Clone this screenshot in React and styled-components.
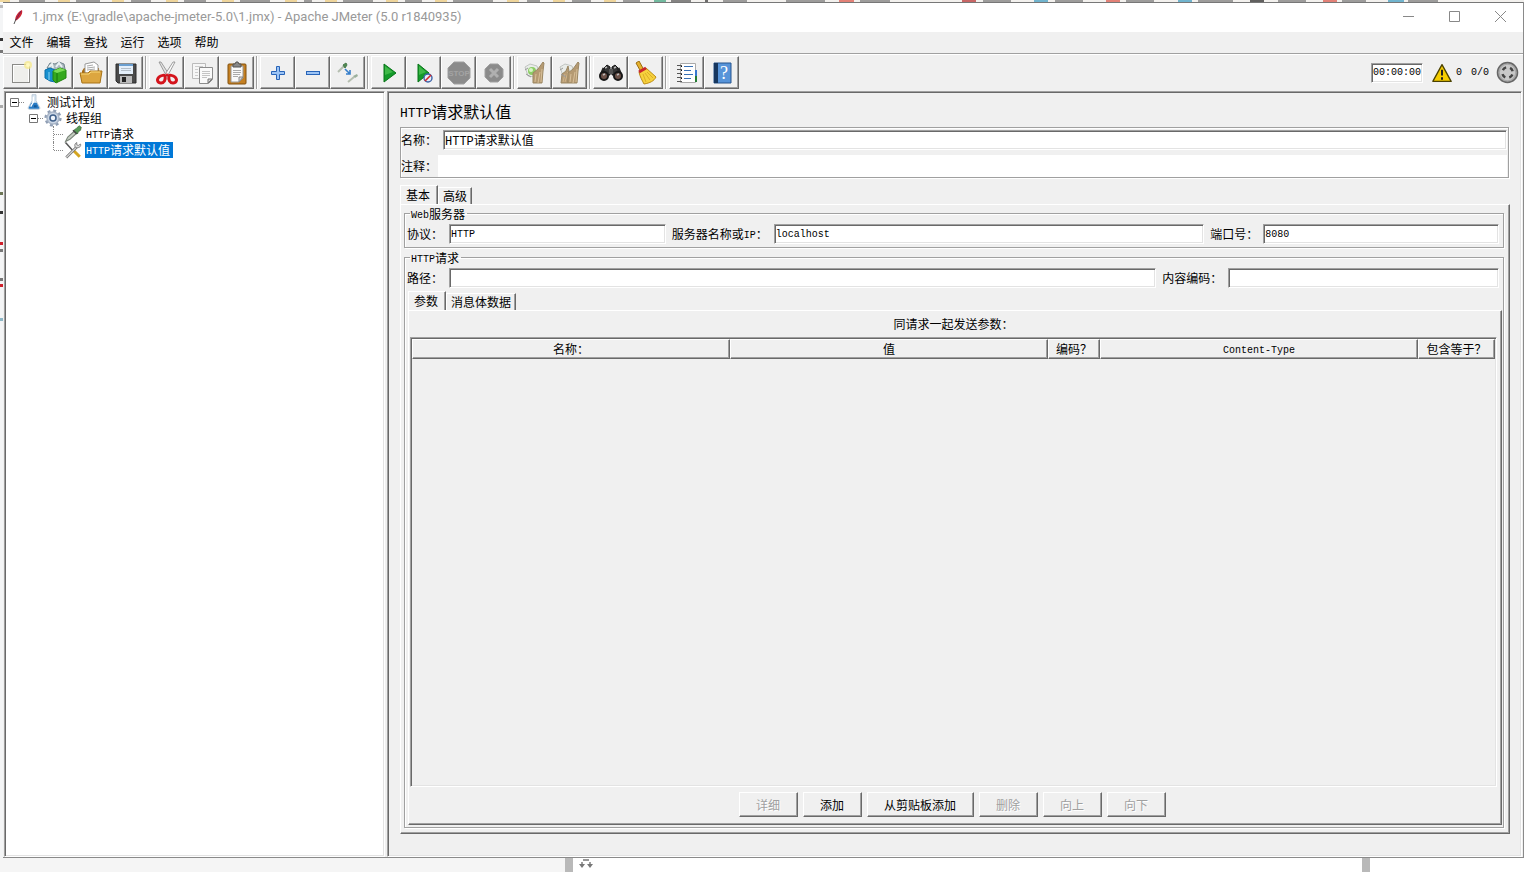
import React, { useState } from "react";
import styled, { createGlobalStyle, css } from "styled-components";

const GlobalStyle = createGlobalStyle`
  * {
    box-sizing: border-box;
  }

  body {
    margin: 0;
    background: #fff;
    color: #000;
    font: 12px/16px "Noto Sans CJK SC", sans-serif;
  }

  button,
  input {
    font: inherit;
    color: inherit;
    border-radius: 0;
    margin: 0;
  }
`;

const mono = `"Liberation Mono", "Noto Sans CJK SC", monospace`;

const raised = css`
  border: 1px solid;
  border-color: #fff #696969 #696969 #fff;
  box-shadow: inset -1px -1px 0 #a0a0a0;
`;

const sunken = css`
  border: 1px solid;
  border-color: #a0a0a0 #fff #fff #a0a0a0;
  box-shadow: inset 1px 1px 0 #696969, inset -1px -1px 0 #e3e3e3;
  outline: none;
`;

const etched = css`
  border: 1px solid #a0a0a0;
  box-shadow: 1px 1px 0 #fff, inset 1px 1px 0 #fff;
`;

const Desktop = styled.div`
  display: flex;
  flex-direction: column;
  min-height: 100vh;
`;

const TopSliver = styled.svg`
  display: block;
  width: 100%;
  height: 2px;
  background: #f3f1ee;
`;

const Middle = styled.div`
  display: flex;
  flex: 1;
`;

const LeftSliver = styled.svg`
  display: block;
  width: 3px;
  background: #f4f5f6;
`;

const BottomSliver = styled.div`
  display: flex;
  height: 14px;
  background: #fff;
`;

const SliverPart = styled.div`
  flex: ${(props) => props.$grow || "0 0 8px"};
  background: ${(props) => props.$color || "#b9b9b9"};

  svg {
    display: block;
    margin-left: 6px;
  }
`;

const Window = styled.div`
  display: flex;
  flex: 1;
  flex-direction: column;
  min-width: 0;
  background: #f0f0f0;
  border: solid #8a8a8a;
  border-width: 0 1px 1px 0;
`;

const TitleBar = styled.header`
  display: flex;
  align-items: center;
  height: 30px;
  padding: 0 0 2px 9px;
  background: #fff;
  border-top: 1px solid #777;
`;

const WindowTitle = styled.h1`
  flex: 1;
  margin: 0 0 0 8px;
  font: 13px/16px Roboto, sans-serif;
  color: #999;
`;

const WindowButton = styled.button`
  display: flex;
  align-items: center;
  justify-content: center;
  width: 46px;
  height: 27px;
  padding: 0;
  border: none;
  background: none;
`;

const MenuBar = styled.nav`
  display: flex;
  height: 22px;
  padding-bottom: 2px;
  border-bottom: 1px solid #a0a0a0;
`;

const MenuButton = styled.button`
  width: 37px;
  padding: 0;
  border: none;
  background: none;
`;

const ToolBar = styled.div`
  display: flex;
  align-items: center;
  height: 37px;
  padding: 0 4px 1px 0;
  border-top: 1px solid #fff;
`;

const ToolButton = styled.button`
  display: flex;
  align-items: center;
  justify-content: center;
  width: 35px;
  height: 33px;
  padding: 0;
  background: #f0f0f0;
  ${raised}
`;

const ToolSeparator = styled.div`
  width: 2px;
  height: 33px;
  margin: 0 2px;
  border-left: 1px solid #a0a0a0;
  background: #fff;
`;

const Status = styled.div`
  display: flex;
  align-items: center;
  margin-left: auto;
  font-family: ${mono};
  font-size: 10px;
`;

const Timer = styled.output`
  width: 52px;
  height: 20px;
  background: #fff;
  line-height: 18px;
  text-align: center;
  white-space: nowrap;
  ${sunken}
`;

const WarningButton = styled.button`
  display: flex;
  align-items: center;
  gap: 4px;
  margin: 0 9px;
  padding: 0;
  border: none;
  background: none;
`;

const ThreadState = styled.span`
  display: flex;
  align-items: center;
  gap: 7px;
`;

const Split = styled.div`
  display: flex;
  flex: 1;
  padding: 0 1px;
`;

const TreePane = styled.aside`
  flex: 0 0 381px;
  padding: 2px 1px;
  background: #fff;
  ${sunken}
`;

const TreeList = styled.ul`
  margin: 0;
  padding: 0;
  list-style: none;
`;

const TreeRow = styled.div`
  display: flex;
  align-items: center;
  height: 16px;
  padding-left: ${(props) => props.$depth * 19 + 4}px;
`;

const Toggle = styled.button`
  display: flex;
  width: 9px;
  height: 9px;
  padding: 0;
  border: none;
  background: none;
`;

const Dots = styled.span`
  width: ${(props) => props.$width}px;
  border-top: 1px dotted #888;
`;

const Stem = styled.span`
  align-self: ${(props) => (props.$last ? "flex-start" : "stretch")};
  height: ${(props) => (props.$last ? "8px" : "auto")};
  margin-left: 5px;
  border-left: 1px dotted #888;
`;

const NodeIcon = styled.span`
  display: flex;
  align-items: center;
  justify-content: center;
  width: 20px;
  height: 18px;
`;

const NodeLabel = styled.button`
  height: 16px;
  margin-left: 2px;
  padding: 0 3px 0 1px;
  border: none;
  line-height: 16px;
  white-space: nowrap;
  background: ${(props) => (props.$selected ? "#0078d7" : "none")};
  color: ${(props) => (props.$selected ? "#fff" : "#000")};
`;

const Latin = styled.span`
  font-family: ${mono};
  font-size: ${(props) => (props.$large ? 13 : 10)}px;
  line-height: 1;
  vertical-align: 1px;
`;

const Editor = styled.main`
  display: flex;
  flex: 1;
  flex-direction: column;
  min-width: 0;
  margin-left: 2px;
  padding: 9px 11px 22px 12px;
  ${sunken}
`;

const EditorTitle = styled.h2`
  margin: 0 0 6px;
  font-size: 16px;
  font-weight: normal;
  line-height: 20px;
`;

const NameBox = styled.div`
  margin: 0 1px 7px 0;
  padding: 2px 1px 0 0;
  ${etched}
`;

const NameRow = styled.div`
  display: flex;
  align-items: center;
  margin-bottom: ${(props) => (props.$last ? 0 : 5)}px;
`;

const Label = styled.label`
  flex: none;
  width: ${(props) => props.$width}px;
  white-space: nowrap;
`;

const TextInput = styled.input`
  flex: 1;
  width: 0;
  min-width: 0;
  height: 20px;
  padding: 0 1px;
  background: #fff;
  font-family: ${mono};
  font-size: ${(props) => (props.$latin ? 10 : 12)}px;
  ${sunken}
`;

const PlainInput = styled.input`
  flex: 1;
  height: 22px;
  padding: 0 2px;
  border: none;
  outline: none;
  background: #fff;
`;

const Tabs = styled.div`
  display: flex;
  flex: 1;
  flex-direction: column;
  margin: ${(props) => (props.$inner ? "3px 1px 0" : "0")};
`;

const TabList = styled.div`
  display: flex;
  align-items: flex-end;
  height: 19px;
`;

const Tab = styled.button`
  height: ${(props) => (props.$active ? 19 : 17)}px;
  padding: ${(props) => (props.$active ? "0 7px 0 5px" : "0 4px")};
  background: #f0f0f0;
  border: solid;
  border-width: 1px 1px 0 1px;
  border-color: #fff #696969 #fff #fff;
  box-shadow: inset -1px 0 0 #a0a0a0;
  line-height: 16px;
`;

const TabPanel = styled.section`
  display: flex;
  flex: 1;
  flex-direction: column;
  padding: ${(props) => props.$padding};
  ${raised}
`;

const Group = styled.fieldset`
  display: flex;
  flex: ${(props) => (props.$fill ? "1" : "none")};
  flex-direction: column;
  min-width: 0;
  margin: 0 0 ${(props) => (props.$fill ? 0 : 3)}px;
  padding: 5px 0 ${(props) => (props.$fill ? 2 : 3)}px 2px;
  ${etched}
`;

const GroupTitle = styled.legend`
  height: 12px;
  margin-left: 3px;
  padding: 0 2px 0 1px;
  line-height: 13px;
`;

const FieldRow = styled.div`
  display: flex;
  align-items: center;
  gap: 6px;
  padding-right: 4px;
`;

const Field = styled.div`
  display: flex;
  flex: ${(props) => props.$grow} 1 0;
  align-items: center;
  min-width: 0;
`;

const TableCaption = styled.p`
  margin: 0 0 3px;
  text-align: center;
  line-height: 20px;
`;

const TableView = styled.div`
  flex: 1;
  padding: 1px;
  ${sunken}
`;

const ArgumentTable = styled.table`
  width: 100%;
  table-layout: fixed;
  border-collapse: separate;
  border-spacing: 0;
`;

const HeadCell = styled.th`
  width: ${(props) => props.$width || "auto"};
  height: 20px;
  padding: 0;
  font-weight: normal;
  line-height: 16px;
  white-space: nowrap;
  ${raised}
`;

const ButtonRow = styled.div`
  display: flex;
  justify-content: center;
  gap: 5px;
  padding: 5px 2px 6px 0;
`;

const PushButton = styled.button`
  height: 25px;
  padding: 0 17px 0 16px;
  background: #f0f0f0;
  ${raised}

  &:disabled {
    color: #a0a0a0;
    text-shadow: 1px 1px 0 #fff;
  }
`;

const Icon = ({ size = 24, children }) => (
  <svg width={size} height={size} viewBox="0 0 24 24" aria-hidden="true">
    {children}
  </svg>
);

const NewIcon = () => (
  <Icon>
    <rect x="3.5" y="3.5" width="17" height="18" fill="#efefec" stroke="#8b8b88" />
    <path d="M4.5 21V4.5h15V21" fill="none" stroke="#fff" />
    <circle cx="19" cy="4" r="4" fill="#f7e98a" opacity=".75" />
    <circle cx="19" cy="4" r="2" fill="#fff8c0" />
  </Icon>
);

const TemplatesIcon = () => (
  <Icon>
    <path d="M3 7l3-5 5 1 4-2 5 2 1 5-9 4z" fill="#a9b7bd" stroke="#71838c" />
    <path d="M5 6l3-3 1 4M12 6l3-4 3 4" fill="none" stroke="#e9f0f2" strokeWidth="2" />
    <path d="M1 9l5-2 5 2v12l-5-1-5-3z" fill="#1790cf" stroke="#0b6ea9" />
    <path d="M5 11v8" stroke="#8fd5f3" />
    <path d="M9 10l7-3 6 2v8l-10 5-3-3z" fill="#35a91e" stroke="#21850f" />
    <path d="M9 10l4 2 9-3-6-2z" fill="#7bdc55" />
    <path d="M13 12v9" stroke="#16740b" />
  </Icon>
);

const OpenIcon = () => (
  <Icon>
    <path d="M3 10l2-3h15l1 14H3z" fill="#a96d14" />
    <path d="M6 12V3l9-2 4 3v9z" fill="#fff" stroke="#999" />
    <path d="M8 5l6-1M8 7l8-1M8 9l8-1" stroke="#aaa" />
    <path d="M1 12h8l2-2h12l-2 12H3z" fill="#dca640" stroke="#a87316" />
    <path d="M2 13h8l2-2h9" fill="none" stroke="#f8d779" />
  </Icon>
);

const SaveIcon = () => (
  <Icon>
    <path d="M2 3h20v19H4l-2-2z" fill="#4a4a4a" stroke="#2c2c2c" />
    <rect x="5" y="3" width="14" height="10" fill="#e4effa" />
    <path d="M5 4h14" stroke="#6b9fd0" strokeWidth="2" />
    <path d="M7 7.5h10M7 9.5h10" stroke="#b4bec8" />
    <rect x="6" y="15" width="12" height="7" fill="#bbb" />
    <rect x="8" y="16" width="4" height="5" fill="#222" />
  </Icon>
);

const CutIcon = () => (
  <Icon>
    <path d="M4 1l2 0 9 14-3 1z" fill="#e2e2e2" stroke="#888" strokeWidth=".8" />
    <path d="M20 1l-2 0-9 14 3 1z" fill="#fafafa" stroke="#888" strokeWidth=".8" />
    <path d="M10 15c0-1-4-1-6 1-3 3-1 6 2 6s5-3 4-7z" fill="none" stroke="#d4141c" strokeWidth="3" />
    <path d="M14 15c0-1 4-1 6 1 3 3 1 6-2 6s-5-3-4-7z" fill="none" stroke="#d4141c" strokeWidth="3" />
    <path d="M10 15l2-3 2 3z" fill="#d4141c" />
  </Icon>
);

const CopyIcon = () => (
  <Icon>
    <path d="M2.5 2.5h13v15h-13z" fill="#f6f6f6" stroke="#bbb" />
    <path d="M5 5.5h8M5 8.5h3M5 11.5h3M5 14.5h3" stroke="#ccc" />
    <path d="M9.5 6.5h13v12l-4 4h-9z" fill="#fafafa" stroke="#8c8c8c" />
    <path d="M12 10.5h8M12 12.5h8M12 14.5h8M12 16.5h5" stroke="#c4c4c4" />
    <path d="M22 18h-4v4z" fill="#ddd" stroke="#777" />
  </Icon>
);

const PasteIcon = () => (
  <Icon>
    <rect x="3" y="3" width="18" height="20" rx="1" fill="#c58022" stroke="#81500f" />
    <path d="M6 5h12v12l-4 4H6z" fill="#fafafa" stroke="#999" />
    <path d="M8 9.5h8M8 11.5h8M8 13.5h7M8 15.5h5" stroke="#aaa" />
    <path d="M18 16h-4v5z" fill="#d8d8d8" stroke="#888" />
    <path d="M8 6V3h2l1-2h2l1 2h2v3z" fill="#888" stroke="#555" />
  </Icon>
);

const PlusIcon = () => (
  <Icon>
    <path d="M10.5 5.5h3v5h5v3h-5v5h-3v-5h-5v-3h5z" fill="#9cc4f5" stroke="#2864b8" />
  </Icon>
);

const MinusIcon = () => (
  <Icon>
    <rect x="5.5" y="10.5" width="13" height="3" fill="#9cc4f5" stroke="#2864b8" />
  </Icon>
);

const ToggleIcon = () => (
  <Icon>
    <path d="M2 11l6-6" stroke="#b5beb0" strokeWidth="2" />
    <path d="M7 4l3-2 1 2-2 3z" fill="#4d8a50" stroke="#4a7a4c" />
    <path d="M12 21l6-5" stroke="#b5beb0" strokeWidth="2" />
    <path d="M17 15l4-2 1 2-3 2z" fill="#9bb09c" />
    <path d="M9 8l5 5M14 9v4h-4" fill="none" stroke="#377fcb" strokeWidth="1.6" />
  </Icon>
);

const StartIcon = () => (
  <Icon>
    <path d="M7 3l12 9-12 9z" fill="#149a2a" stroke="#087518" />
    <path d="M8 5l8 6-8 3z" fill="#51c656" opacity=".7" />
  </Icon>
);

const StartNoTimersIcon = () => (
  <Icon>
    <path d="M6 3l11 9-11 9z" fill="#149a2a" stroke="#087518" />
    <path d="M7 5l7 6-7 3z" fill="#51c656" opacity=".7" />
    <circle cx="16" cy="17" r="4" fill="#e6eefb" stroke="#3c62a6" strokeWidth="1.4" />
    <path d="M13 20l6-6" stroke="#d4272a" strokeWidth="1.6" />
  </Icon>
);

const StopIcon = () => (
  <Icon>
    <path d="M7 1h10l6 6v10l-6 6H7l-6-6V7z" fill="#8b8b8b" stroke="#a0a0a0" />
    <text
      x="12"
      y="15"
      textAnchor="middle"
      fill="#a3a3a3"
      fontFamily="Liberation Sans, sans-serif"
      fontSize="8"
      fontWeight="bold"
    >
      STOP
    </text>
  </Icon>
);

const ShutdownIcon = () => (
  <Icon>
    <path d="M8 3h8l5 5v8l-5 5H8l-5-5V8z" fill="#8b8b8b" stroke="#a0a0a0" />
    <path d="M8 8l8 8M16 8l-8 8" stroke="#b0b0b0" strokeWidth="3" />
  </Icon>
);

const ClearIcon = ({ all }) => (
  <Icon>
    <path d="M2 6l5-3 7 2 2 6-4 5-7-1z" fill="#e9ece9" stroke="#c1c5c1" />
    {!all && <circle cx="9" cy="10" r="4" fill="#8ccd65" />}
    {!all && <circle cx="8" cy="9" r="2" fill="#d8f3c8" />}
    {all && <path d="M3 22l1-9 4-3 2-5 1 5-1 12z" fill="#b59a72" stroke="#9b8763" />}
    {all && <path d="M5 21l2-8M7 21l3-10" stroke="#d0b48a" />}
    <path d="M10 22V12l5-4 5-7 1 1-1 8-1 12z" fill="#b59a72" stroke="#9b8763" />
    <path d="M12 21l1-8M15 22l2-11M18 21l1-13" stroke="#d8c09a" />
    <path d="M3 13l5 3M2 9l3-2" stroke="#999" />
  </Icon>
);

const SearchIcon = () => (
  <Icon>
    <path d="M5 7l3-3 3 2v8H3zM19 7l-3-3-3 2v8h8z" fill="#363636" stroke="#151515" />
    <path d="M5 7l-3 7M19 7l3 7" stroke="#222" strokeWidth="3" />
    <rect x="10" y="8" width="4" height="5" fill="#555" />
    <circle cx="5" cy="15" r="4" fill="#6c5148" stroke="#171717" strokeWidth="2" />
    <circle cx="19" cy="15" r="4" fill="#6c5148" stroke="#171717" strokeWidth="2" />
    <path d="M4 14l2-1M18 14l2-1M6 7l2-1M15 7l2-1" stroke="#b9b9b9" strokeWidth="1.4" />
  </Icon>
);

const BroomIcon = () => (
  <Icon>
    <path d="M2 2l3-2 5 9-3 2z" fill="#e5b22e" stroke="#9d6d10" />
    <path d="M5 11l7-4 10 9c-2 4-6 6-12 7-2-4-4-7-5-12z" fill="#f6d13d" stroke="#bd8c14" />
    <path d="M5 11l7-4" stroke="#c7252c" strokeWidth="3" />
    <path d="M9 13l3 8M11 12l5 7M13 11l6 6" stroke="#dbae28" />
  </Icon>
);

const FunctionIcon = () => (
  <Icon>
    <path d="M5.5 2.5h15v19h-15z" fill="#fff" stroke="#aaa" />
    <path d="M9 5.5h9M9 9.5h7M9 13.5h9M9 17.5h7" stroke="#3971b5" />
    <path d="M2 4.5h5M2 8.5h5M2 12.5h5M2 16.5h5M2 20.5h5" stroke="#555" />
    <path d="M6 5.5h1M6 9.5h1M6 13.5h1M6 17.5h1" stroke="#111" />
    <path d="M21 9v6" stroke="#3778d0" strokeWidth="2" />
    <path d="M21 15v6" stroke="#267d33" strokeWidth="2" />
  </Icon>
);

const HelpIcon = () => (
  <Icon>
    <path d="M4 2h17v20H4z" fill="#5794d9" stroke="#27558e" />
    <path d="M4 2h4v20H4z" fill="#17375f" />
    <text
      x="14"
      y="18"
      textAnchor="middle"
      fill="#fff"
      fontFamily="Liberation Serif, serif"
      fontSize="18"
    >
      ?
    </text>
  </Icon>
);

const WarningIcon = () => (
  <Icon size={20}>
    <path d="M12 2l11 20H1z" fill="#f5cd00" stroke="#4c4200" strokeWidth="1.6" strokeLinejoin="round" />
    <path d="M12 8v7M12 17v3" stroke="#222" strokeWidth="2.4" />
  </Icon>
);

const EngineIcon = () => (
  <Icon size={23}>
    <circle cx="12" cy="12" r="10.5" fill="#a9a9a9" stroke="#666" strokeWidth="1.5" />
    <circle cx="12" cy="12" r="8" fill="#c9c9c9" />
    <circle
      cx="12"
      cy="12"
      r="5.5"
      fill="none"
      stroke="#444"
      strokeWidth="2.6"
      strokeDasharray="4.32 4.32"
      strokeDashoffset="-2.16"
    />
  </Icon>
);

const FeatherIcon = () => (
  <svg width="12" height="16" viewBox="0 0 12 16" aria-hidden="true">
    <path d="M10 1c1 3-1 7-5 10l-2 1c0-5 3-9 7-11z" fill="#cf2533" />
    <path d="M9 2L4 11" stroke="#7a2052" />
    <path d="M4 10l-2 5" stroke="#555" />
  </svg>
);

const FlaskIcon = () => (
  <Icon size={16}>
    <path d="M9 1h6v9l6 11c0 1-1 2-2 2H5c-1 0-2-1-2-2l6-11z" fill="#dce8f3" stroke="#a5b8c9" />
    <path d="M8 13h8l4 8-1 1H5l-1-1z" fill="#297bc4" />
    <path d="M11 4v8l-4 7" fill="none" stroke="#fff" strokeWidth="2" />
    <path d="M12 17h4v3h-4z" fill="#155795" />
  </Icon>
);

const GearIcon = () => (
  <Icon size={18}>
    <circle cx="12" cy="12" r="9" fill="#a9b6c8" />
    <circle
      cx="12"
      cy="12"
      r="10"
      fill="none"
      stroke="#8f9eb4"
      strokeWidth="3"
      strokeDasharray="4 3.85"
    />
    <circle cx="12" cy="12" r="7" fill="#cbd6e5" />
    <circle cx="12" cy="12" r="5" fill="#3f608a" />
    <circle cx="12" cy="12" r="3" fill="#eef4fb" />
  </Icon>
);

const DropperIcon = () => (
  <Icon size={18}>
    <path d="M2 22l3-6 9-8 3 3-9 8-6 3z" fill="#c4ccc1" stroke="#7b867a" strokeWidth="1.4" />
    <path d="M13 7l3-2 4-4 3 2-1 4-3 2-1 3z" fill="#579a55" stroke="#3b6e3e" />
    <path d="M12 7l5 5" stroke="#444" strokeWidth="2" />
  </Icon>
);

const ToolsIcon = () => (
  <Icon size={18}>
    <path d="M2 2l9 10" stroke="#555" strokeWidth="2" />
    <path d="M12 12l9 9" stroke="#d4a521" strokeWidth="4" />
    <path d="M3 22L17 8" stroke="#666" strokeWidth="3.4" />
    <path d="M3 22L17 8" stroke="#d5d5d5" strokeWidth="1.6" />
    <path d="M17 2c-4 2-3 7 0 7 4 0 6-2 5-5l-3 2-2-1z" fill="#ddd" stroke="#666" />
  </Icon>
);

const ArrowsIcon = () => (
  <svg width="14" height="12" viewBox="0 0 14 12" aria-hidden="true">
    <path d="M4 2h6M3 4v4M11 4v4" stroke="#777" strokeWidth="1.4" fill="none" />
    <path d="M0 6h6L3 10zM8 6h6l-3 4z" fill="#777" />
  </svg>
);

const menus = ["文件", "编辑", "查找", "运行", "选项", "帮助"];

const toolGroups = [
  [
    ["新建", <NewIcon />],
    ["模板", <TemplatesIcon />],
    ["打开", <OpenIcon />],
    ["保存", <SaveIcon />],
  ],
  [
    ["剪切", <CutIcon />],
    ["复制", <CopyIcon />],
    ["粘贴", <PasteIcon />],
  ],
  [
    ["展开", <PlusIcon />],
    ["收起", <MinusIcon />],
    ["切换", <ToggleIcon />],
  ],
  [
    ["启动", <StartIcon />],
    ["不停顿启动", <StartNoTimersIcon />],
    ["停止", <StopIcon />, true],
    ["关闭", <ShutdownIcon />, true],
  ],
  [
    ["清除", <ClearIcon />],
    ["清除全部", <ClearIcon all />],
  ],
  [
    ["搜索", <SearchIcon />],
    ["重置搜索", <BroomIcon />],
  ],
  [
    ["函数助手", <FunctionIcon />],
    ["帮助", <HelpIcon />],
  ],
];

// [x, width, colour] of the tabs peeking out above the window
const topMarks = [
  [0, 10, "#f0cf7e"], [19, 26, "#777"], [58, 12, "#edc978"], [76, 24, "#777"],
  [112, 12, "#edc978"], [131, 20, "#777"], [166, 12, "#edc978"], [184, 22, "#777"],
  [222, 12, "#edc978"], [240, 30, "#777"], [285, 12, "#edc978"], [304, 8, "#777"],
  [325, 12, "#edc978"], [343, 30, "#777"], [386, 12, "#edc978"], [405, 17, "#777"],
  [435, 12, "#edc978"], [453, 40, "#777"], [507, 12, "#edc978"], [527, 13, "#777"],
  [553, 12, "#edc978"], [572, 19, "#777"], [604, 12, "#edc978"], [623, 17, "#777"],
  [654, 12, "#3aa37e"], [671, 20, "#555"], [705, 3, "#333"], [723, 24, "#777"],
  [786, 39, "#777"], [839, 15, "#dc5145"], [860, 30, "#777"], [962, 14, "#b52b2b"],
  [983, 28, "#777"], [1034, 14, "#399ac0"], [1055, 28, "#777"], [1106, 14, "#dc5145"],
  [1126, 28, "#777"], [1178, 14, "#399ac0"], [1198, 35, "#777"], [1250, 14, "#222"],
  [1278, 28, "#777"], [1323, 14, "#dc5145"], [1342, 24, "#777"], [1388, 16, "#399ac0"],
  [1408, 30, "#777"],
];

const leftMarks = [
  [3, "#bbb"], [36, "#333"], [48, "#777"], [103, "#aaa"], [190, "#6b7454"],
  [209, "#333"], [240, "#cf1f2a"], [247, "#777"], [276, "#777"], [282, "#cf1f2a"],
  [316, "#8db7c6"],
];

const Tree = () => {
  const [selected, setSelected] = useState("defaults");

  const node = (id, text) => (
    <NodeLabel $selected={selected === id} onClick={() => setSelected(id)}>
      {text}
    </NodeLabel>
  );

  const toggle = (
    <Toggle aria-label="收起">
      <svg width="9" height="9" viewBox="0 0 9 9">
        <path d="M.5.5h8v8h-8z" fill="#fff" stroke="#777" />
        <path d="M2 4.5h5" stroke="#000" />
      </svg>
    </Toggle>
  );

  return (
    <TreePane>
      <TreeList>
        <li>
          <TreeRow $depth={0}>
            {toggle}
            <Dots $width={5} />
            <NodeIcon><FlaskIcon /></NodeIcon>
            {node("plan", "测试计划")}
          </TreeRow>
        </li>
        <li>
          <TreeRow $depth={1}>
            {toggle}
            <Dots $width={5} />
            <NodeIcon><GearIcon /></NodeIcon>
            {node("group", "线程组")}
          </TreeRow>
        </li>
        <li>
          <TreeRow $depth={2}>
            <Stem />
            <Dots $width={9} />
            <NodeIcon><DropperIcon /></NodeIcon>
            {node("request", <><Latin>HTTP</Latin>请求</>)}
          </TreeRow>
        </li>
        <li>
          <TreeRow $depth={2}>
            <Stem $last />
            <Dots $width={9} />
            <NodeIcon><ToolsIcon /></NodeIcon>
            {node("defaults", <><Latin>HTTP</Latin>请求默认值</>)}
          </TreeRow>
        </li>
      </TreeList>
    </TreePane>
  );
};

const Arguments = () => (
  <TabPanel $padding="3px 4px 1px 1px">
    <TableCaption>同请求一起发送参数：</TableCaption>
    <TableView>
      <ArgumentTable>
        <thead>
          <tr>
            <HeadCell>名称：</HeadCell>
            <HeadCell>值</HeadCell>
            <HeadCell $width="52px">编码？</HeadCell>
            <HeadCell><Latin>Content-Type</Latin></HeadCell>
            <HeadCell $width="77px">包含等于？</HeadCell>
          </tr>
        </thead>
        <tbody />
      </ArgumentTable>
    </TableView>
    <ButtonRow>
      <PushButton disabled>详细</PushButton>
      <PushButton>添加</PushButton>
      <PushButton>从剪贴板添加</PushButton>
      <PushButton disabled>删除</PushButton>
      <PushButton disabled>向上</PushButton>
      <PushButton disabled>向下</PushButton>
    </ButtonRow>
  </TabPanel>
);

const App = () => (
  <Desktop lang="zh-CN">
    <GlobalStyle />
    <TopSliver aria-hidden="true">
      {topMarks.map(([x, width, color]) => (
        <rect key={x} x={x} y="0" width={width} height="2" fill={color} opacity=".7" />
      ))}
    </TopSliver>
    <Middle>
      <LeftSliver aria-hidden="true">
        {leftMarks.map(([y, color]) => (
          <rect key={y} x="0" y={y} width="3" height="3" fill={color} />
        ))}
      </LeftSliver>
      <Window>
        <TitleBar>
          <FeatherIcon />
          <WindowTitle>
            1.jmx (E:\gradle\apache-jmeter-5.0\1.jmx) - Apache JMeter (5.0 r1840935)
          </WindowTitle>
          <WindowButton aria-label="最小化">
            <svg width="11" height="11"><path d="M0 5.5h11" stroke="#888" /></svg>
          </WindowButton>
          <WindowButton aria-label="最大化">
            <svg width="11" height="11"><path d="M.5.5h10v10H.5z" fill="none" stroke="#888" /></svg>
          </WindowButton>
          <WindowButton aria-label="关闭窗口">
            <svg width="11" height="11"><path d="M0 0l11 11M11 0L0 11" stroke="#888" /></svg>
          </WindowButton>
        </TitleBar>
        <MenuBar>
          {menus.map((menu) => (
            <MenuButton key={menu}>{menu}</MenuButton>
          ))}
        </MenuBar>
        <ToolBar>
          {toolGroups.map((group, index) => (
            <React.Fragment key={index}>
              {index > 0 && <ToolSeparator />}
              {group.map(([name, icon, disabled]) => (
                <ToolButton key={name} aria-label={name} disabled={disabled}>
                  {icon}
                </ToolButton>
              ))}
            </React.Fragment>
          ))}
          <Status>
            <Timer>00:00:00</Timer>
            <WarningButton aria-label="日志">
              <WarningIcon />
              <span>0</span>
            </WarningButton>
            <ThreadState>
              0/0
              <EngineIcon />
            </ThreadState>
          </Status>
        </ToolBar>
        <Split>
          <Tree />
          <Editor>
            <EditorTitle><Latin $large>HTTP</Latin>请求默认值</EditorTitle>
            <NameBox>
              <NameRow>
                <Label htmlFor="name" $width={42}>名称：</Label>
                <TextInput id="name" defaultValue="HTTP请求默认值" />
              </NameRow>
              <NameRow $last>
                <Label htmlFor="comment" $width={37}>注释：</Label>
                <PlainInput id="comment" />
              </NameRow>
            </NameBox>
            <Tabs>
              <TabList role="tablist">
                <Tab role="tab" $active aria-selected="true">基本</Tab>
                <Tab role="tab" aria-selected="false">高级</Tab>
              </TabList>
              <TabPanel $padding="2px 5px 5px 3px">
                <Group>
                  <GroupTitle><Latin>Web</Latin>服务器</GroupTitle>
                  <FieldRow>
                    <Field $grow={259}>
                      <Label htmlFor="protocol" $width={42}>协议：</Label>
                      <TextInput id="protocol" $latin defaultValue="HTTP" />
                    </Field>
                    <Field $grow={533}>
                      <Label htmlFor="server" $width={102}>服务器名称或<Latin>IP</Latin>：</Label>
                      <TextInput id="server" $latin defaultValue="localhost" />
                    </Field>
                    <Field $grow={289}>
                      <Label htmlFor="port" $width={53}>端口号：</Label>
                      <TextInput id="port" $latin defaultValue="8080" />
                    </Field>
                  </FieldRow>
                </Group>
                <Group $fill>
                  <GroupTitle><Latin>HTTP</Latin>请求</GroupTitle>
                  <FieldRow>
                    <Field $grow={69}>
                      <Label htmlFor="path" $width={42}>路径：</Label>
                      <TextInput id="path" $latin />
                    </Field>
                    <Field $grow={31}>
                      <Label htmlFor="encoding" $width={66}>内容编码：</Label>
                      <TextInput id="encoding" $latin />
                    </Field>
                  </FieldRow>
                  <Tabs $inner>
                    <TabList role="tablist">
                      <Tab role="tab" $active aria-selected="true">参数</Tab>
                      <Tab role="tab" aria-selected="false">消息体数据</Tab>
                    </TabList>
                    <Arguments />
                  </Tabs>
                </Group>
              </TabPanel>
            </Tabs>
          </Editor>
        </Split>
      </Window>
    </Middle>
    <BottomSliver>
      <SliverPart $grow="565 1 0" $color="#f5f5f5" />
      <SliverPart />
      <SliverPart $grow="789 1 0" $color="#fff"><ArrowsIcon /></SliverPart>
      <SliverPart />
      <SliverPart $grow="154 1 0" $color="#fff" />
    </BottomSliver>
  </Desktop>
);

export default App;
